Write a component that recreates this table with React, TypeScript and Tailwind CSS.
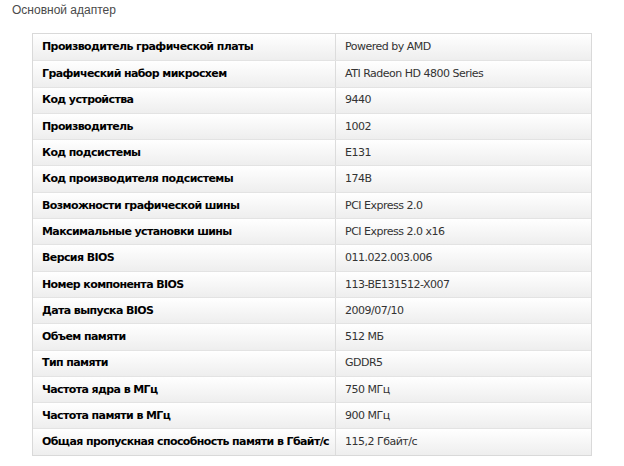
const rows: [string, string][] = [
  ['Производитель графической платы', 'Powered by AMD'],
  ['Графический набор микросхем', 'ATI Radeon HD 4800 Series'],
  ['Код устройства', '9440'],
  ['Производитель', '1002'],
  ['Код подсистемы', 'E131'],
  ['Код производителя подсистемы', '174B'],
  ['Возможности графической шины', 'PCI Express 2.0'],
  ['Максимальные установки шины', 'PCI Express 2.0 x16'],
  ['Версия BIOS', '011.022.003.006'],
  ['Номер компонента BIOS', '113-BE131512-X007'],
  ['Дата выпуска BIOS', '2009/07/10'],
  ['Объем памяти', '512 МБ'],
  ['Тип памяти', 'GDDR5'],
  ['Частота ядра в МГц', '750 МГц'],
  ['Частота памяти в МГц', '900 МГц'],
  ['Общая пропускная способность памяти в Гбайт/с', '115,2 Гбайт/с'],
]

export default function App() {
  return (
    <div className="w-[624px] h-[466px] bg-white overflow-hidden font-['DejaVu_Sans',sans-serif]">
      <div className="pl-3 pt-[3px] text-[12px] leading-[15px] text-[#4a4a4a] font-['Liberation_Sans',Arial,sans-serif]">
        Основной адаптер
      </div>
      <div className="ml-[32px] mt-[15px] w-[560px] border border-[#d9d9d9]">
        {rows.map(([label, value], i) => (
          <div
            key={i}
            className={`flex h-[26.3px] bg-linear-to-b from-white to-[#eeeeee] ${i > 0 ? 'border-t border-[#e3e3e3]' : ''}`}
          >
            <div className="w-[303px] shrink-0 border-r border-[#dcdcdc] pl-[9px] pt-[1px] flex items-center whitespace-nowrap text-[11px] tracking-[-0.6px] font-bold text-black">
              {label}
            </div>
            <div className="flex-1 pl-[9px] pt-[1px] flex items-center whitespace-nowrap text-[11px] tracking-[-0.5px] text-[#333]">
              {value}
            </div>
          </div>
        ))}
      </div>
    </div>
  )
}
